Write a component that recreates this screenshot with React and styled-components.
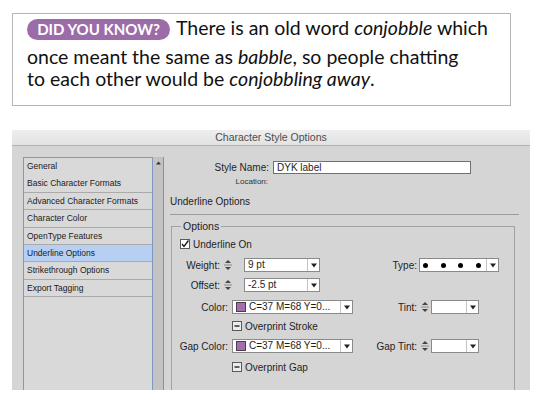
import React from "react";
import styled, { createGlobalStyle } from "styled-components";

const GlobalStyle = createGlobalStyle`
  html, body { margin: 0; padding: 0; background: #fff; }
  body { width: 542px; height: 398px; overflow: hidden; }
`;

const Page = styled.div`
  padding: 13px 0 0 12px;
`;

const Callout = styled.div`
  box-sizing: border-box;
  width: 499px;
  height: 93px;
  border: 1px solid #b5b5b5;
  padding: 3px 0 0 14px;
  font-family: Lato, "Liberation Sans", sans-serif;
  font-size: 19.5px;
  color: #111;
  white-space: nowrap;
`;

const FirstLine = styled.div`
  display: flex;
  align-items: flex-start;
  height: 22px;
  line-height: 22px;
  margin-bottom: 7px;
`;

const Line = styled.div`
  height: 22px;
  line-height: 22px;
`;

const Badge = styled.span`
  display: inline-flex;
  align-items: center;
  justify-content: center;
  box-sizing: border-box;
  flex: none;
  width: 143px;
  height: 21px;
  margin: 2px 6px 0 0;
  border-radius: 11px;
  background: #9b6ca7;
  color: #fff;
  font-family: Lato, "Liberation Sans", sans-serif;
  font-weight: 700;
  font-size: 15px;
  line-height: 21px;
`;

const Em = styled.em`
  font-style: italic;
`;

const Dialog = styled.div`
  margin-top: 24px;
  width: 518px;
  height: 260px;
  overflow: hidden;
  background: #d5d5d5;
  font-family: "Liberation Sans", Arial, sans-serif;
  color: #1e1e1e;
`;

const TitleBar = styled.div`
  box-sizing: border-box;
  height: 16px;
  line-height: 15px;
  text-align: center;
  font-size: 10.5px;
  color: #4d4d4d;
  background: linear-gradient(#eeeeee, #e2e2e2);
  border-bottom: 1px solid #b3b3b3;
`;

const DialogBody = styled.div`
  display: flex;
  padding: 11px 0 0 11px;
`;

const Sidebar = styled.div`
  display: flex;
  flex: none;
  width: 141px;
`;

const List = styled.ul`
  list-style: none;
  margin: 0;
  padding: 0;
  box-sizing: border-box;
  width: 130px;
  height: 300px;
  border: 1px solid #8197c0;
  background: #d9d9d9;
`;

const ListItem = styled.li`
  box-sizing: border-box;
  height: 17.4px;
  padding-left: 3px;
  line-height: 16.4px;
  font-size: 8.5px;
  color: #1a1a1a;
  border-bottom: 1px solid ${(p) => (p.$plain ? "transparent" : "#aaaaaa")};
  background: ${(p) => (p.$selected ? "#b7cff3" : "transparent")};
`;

const Scrollbar = styled.div`
  box-sizing: border-box;
  display: flex;
  justify-content: center;
  width: 11px;
  height: 300px;
  padding-top: 4px;
  background: #c3c3c3;
  border-right: 1px solid #8e8e8e;
`;

const Main = styled.div`
  display: flex;
  flex-direction: column;
  width: 349px;
  margin-left: 6px;
`;

const NameRow = styled.div`
  display: flex;
  align-items: center;
  height: 13px;
  margin-top: 4px;
  font-size: 10px;
`;

const RightLabel = styled.span`
  flex: none;
  box-sizing: border-box;
  width: ${(p) => p.$w}px;
  text-align: right;
  white-space: nowrap;
  font-size: ${(p) => p.$size || 10}px;
`;

const TextInput = styled.div`
  box-sizing: border-box;
  width: 198px;
  height: 13px;
  margin-left: 4px;
  padding-left: 3px;
  line-height: 11px;
  font-size: 10px;
  background: #fff;
  border: 1px solid #707070;
`;

const LocationRow = styled.div`
  display: flex;
  height: 10px;
  line-height: 10px;
  margin-top: 3px;
  color: #333;
`;

const SectionTitle = styled.div`
  margin-top: 9px;
  line-height: 12px;
  font-size: 10px;
`;

const Rule = styled.div`
  height: 1px;
  margin-top: 6px;
  background: #9b9b9b;
`;

const Group = styled.fieldset`
  box-sizing: border-box;
  width: 344px;
  height: 220px;
  margin: 5px 0 0 1px;
  padding: 0;
  border: 1px solid #a3a3a3;
  display: flex;
  flex-direction: column;
`;

const Legend = styled.legend`
  margin-left: 9px;
  padding: 0 2px;
  line-height: 12px;
  font-size: 10.5px;
`;

const Row = styled.div`
  display: flex;
  align-items: center;
  height: ${(p) => p.$h || 14}px;
  margin-top: ${(p) => p.$mt}px;
  padding-left: ${(p) => p.$pl || 0}px;
  font-size: 10px;
  white-space: nowrap;
`;

const CheckLabel = styled.span`
  margin-left: 3px;
  font-size: 10px;
`;

const Box = styled.span`
  box-sizing: border-box;
  display: inline-flex;
  width: 10px;
  height: 10px;
  background: ${(p) => (p.$mixed ? "#ececec" : "#fff")};
  border: 1px solid #5a5a5a;
`;

const Field = styled.div`
  box-sizing: border-box;
  display: flex;
  align-items: center;
  flex: none;
  width: ${(p) => p.$w}px;
  height: 14px;
  margin-left: ${(p) => p.$ml || 0}px;
  padding-left: 3px;
  background: #fff;
  border: 1px solid #8a8a8a;
  font-size: 10px;
`;

const FieldText = styled.span`
  flex: 1;
  overflow: hidden;
  line-height: 12px;
`;

const Drop = styled.span`
  box-sizing: border-box;
  display: flex;
  align-items: center;
  justify-content: center;
  width: 12px;
  height: 12px;
  border-left: 1px solid #c4c4c4;
`;

const SpinWrap = styled.span`
  display: flex;
  flex: none;
  margin-left: ${(p) => p.$ml || 0}px;
`;

const Swatch = styled.span`
  box-sizing: border-box;
  flex: none;
  width: 10px;
  height: 10px;
  margin-right: 3px;
  background: #a16fab;
  border: 1px solid #4e3a52;
`;

const Dots = styled.span`
  flex: 1;
  display: flex;
  align-items: center;
  justify-content: space-between;
  padding: 0 5px 0 0;
`;

const Dot = styled.span`
  width: 5px;
  height: 5px;
  border-radius: 50%;
  background: #000;
`;

const UpArrow = () => (
  <svg width="5" height="4" viewBox="0 0 5 4">
    <polygon points="0,3.5 2.5,0.5 5,3.5" fill="#333" />
  </svg>
);

const DownArrow = () => (
  <svg width="6" height="5" viewBox="0 0 6 5">
    <polygon points="0,0.5 6,0.5 3,4.5" fill="#222" />
  </svg>
);

const Spinner = ({ ml }) => (
  <SpinWrap $ml={ml}>
    <svg width="10" height="14" viewBox="0 0 10 14">
      <polygon points="2,5 5,2 8,5" fill="#444" />
      <line x1="1" y1="7" x2="9" y2="7" stroke="#888" strokeWidth="1" />
      <polygon points="2,9 5,12 8,9" fill="#444" />
    </svg>
  </SpinWrap>
);

const Dropdown = ({ w, ml, children }) => (
  <Field $w={w} $ml={ml}>
    {children}
    <Drop>
      <DownArrow />
    </Drop>
  </Field>
);

const Checked = () => (
  <Box>
    <svg width="8" height="8" viewBox="0 0 8 8">
      <path d="M1 4 L3 6.5 L7.5 0.5" fill="none" stroke="#111" strokeWidth="1.3" />
    </svg>
  </Box>
);

const Mixed = () => (
  <Box $mixed>
    <svg width="8" height="8" viewBox="0 0 8 8">
      <line x1="1.5" y1="4" x2="6.5" y2="4" stroke="#222" strokeWidth="1.4" />
    </svg>
  </Box>
);

const sections = [
  { name: "General", plain: true },
  { name: "Basic Character Formats" },
  { name: "Advanced Character Formats" },
  { name: "Character Color" },
  { name: "OpenType Features" },
  { name: "Underline Options", selected: true },
  { name: "Strikethrough Options" },
  { name: "Export Tagging" },
];

export default function App() {
  return (
    <Page>
      <GlobalStyle />
      <Callout>
        <FirstLine>
          <Badge>DID YOU KNOW?</Badge>
          <span>
            There is an old word <Em>conjobble</Em> which
          </span>
        </FirstLine>
        <Line>
          once meant the same as <Em>babble</Em>, so people chatting
        </Line>
        <Line>
          to each other would be <Em>conjobbling away</Em>.
        </Line>
      </Callout>

      <Dialog>
        <TitleBar>Character Style Options</TitleBar>
        <DialogBody>
          <Sidebar>
            <List>
              {sections.map((s) => (
                <ListItem key={s.name} $plain={s.plain} $selected={s.selected}>
                  {s.name}
                </ListItem>
              ))}
            </List>
            <Scrollbar>
              <UpArrow />
            </Scrollbar>
          </Sidebar>
          <Main>
            <NameRow>
              <RightLabel $w={99}>Style Name:</RightLabel>
              <TextInput>DYK label</TextInput>
            </NameRow>
            <LocationRow>
              <RightLabel $w={98} $size={8}>
                Location:
              </RightLabel>
            </LocationRow>
            <SectionTitle>Underline Options</SectionTitle>
            <Rule />
            <Group>
              <Legend>Options</Legend>
              <Row $mt={6} $h={12} $pl={8}>
                <Checked />
                <CheckLabel>Underline On</CheckLabel>
              </Row>
              <Row $mt={8}>
                <RightLabel $w={48}>Weight:</RightLabel>
                <Spinner ml={3} />
                <Dropdown w={76} ml={11}>
                  <FieldText>9 pt</FieldText>
                </Dropdown>
                <RightLabel $w={97}>Type:</RightLabel>
                <Dropdown w={80} ml={2}>
                  <Dots>
                    <Dot />
                    <Dot />
                    <Dot />
                    <Dot />
                  </Dots>
                </Dropdown>
              </Row>
              <Row $mt={6}>
                <RightLabel $w={48}>Offset:</RightLabel>
                <Spinner ml={3} />
                <Dropdown w={76} ml={11}>
                  <FieldText>-2.5 pt</FieldText>
                </Dropdown>
              </Row>
              <Row $mt={8}>
                <RightLabel $w={56}>Color:</RightLabel>
                <Dropdown w={121} ml={4}>
                  <Swatch />
                  <FieldText>C=37 M=68 Y=0...</FieldText>
                </Dropdown>
                <RightLabel $w={64}>Tint:</RightLabel>
                <Spinner ml={3} />
                <Dropdown w={48} ml={1}>
                  <FieldText />
                </Dropdown>
              </Row>
              <Row $mt={6} $h={12} $pl={60}>
                <Mixed />
                <CheckLabel>Overprint Stroke</CheckLabel>
              </Row>
              <Row $mt={7}>
                <RightLabel $w={56}>Gap Color:</RightLabel>
                <Dropdown w={121} ml={4}>
                  <Swatch />
                  <FieldText>C=37 M=68 Y=0...</FieldText>
                </Dropdown>
                <RightLabel $w={64}>Gap Tint:</RightLabel>
                <Spinner ml={3} />
                <Dropdown w={48} ml={1}>
                  <FieldText />
                </Dropdown>
              </Row>
              <Row $mt={8} $h={12} $pl={60}>
                <Mixed />
                <CheckLabel>Overprint Gap</CheckLabel>
              </Row>
            </Group>
          </Main>
        </DialogBody>
      </Dialog>
    </Page>
  );
}
